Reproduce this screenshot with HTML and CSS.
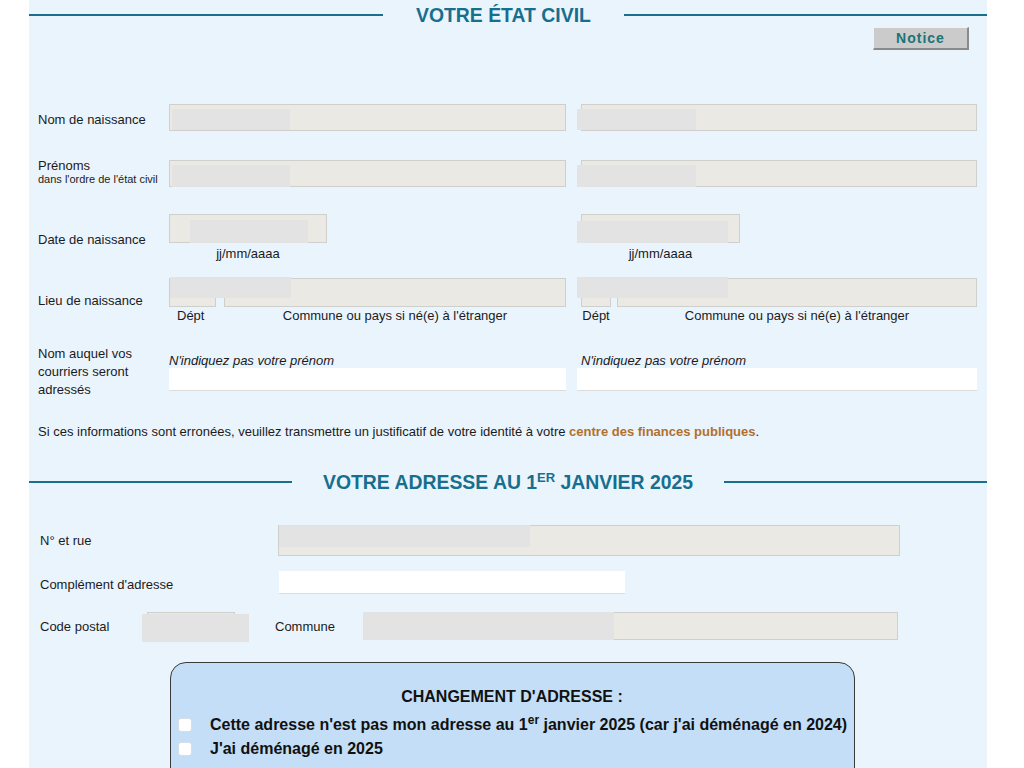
FILE: index.html
```html
<!DOCTYPE html>
<html lang="fr">
<head>
<meta charset="utf-8">
<title>Votre état civil</title>
<link rel="stylesheet" href="styles.css">
</head>
<body>
<div class="panel">
  <div class="section-head head-1">
    <span class="rule rule-left"></span>
    <h2 class="head-title">VOTRE ÉTAT CIVIL</h2>
    <span class="rule rule-right"></span>
  </div>
  <div class="notice-row"><button class="notice" type="button">Notice</button></div>

  <div class="row row-nom">
    <div class="label label-low">Nom de naissance</div>
    <div class="cell"><div class="field h27"><span class="mask mask-a"></span></div></div>
    <div class="cell"><div class="field h27"><span class="mask mask-b"></span></div></div>
  </div>

  <div class="row row-prenoms">
    <div class="label label-two">
      <span class="label-main">Prénoms</span>
      <span class="label-sub">dans l'ordre de l'état civil</span>
    </div>
    <div class="cell"><div class="field h27"><span class="mask mask-a mask-tall"></span></div></div>
    <div class="cell"><div class="field h27"><span class="mask mask-b mask-tall"></span></div></div>
  </div>

  <div class="row row-date">
    <div class="label label-low">Date de naissance</div>
    <div class="cell">
      <div class="col date-left">
        <div class="field h29"><span class="mask mask-date-l"></span></div>
        <div class="hint hint-date">jj/mm/aaaa</div>
      </div>
    </div>
    <div class="cell">
      <div class="col date-right">
        <div class="field h29"><span class="mask mask-date-r"></span></div>
        <div class="hint hint-date">jj/mm/aaaa</div>
      </div>
    </div>
  </div>

  <div class="row row-lieu">
    <div class="label">Lieu de naissance</div>
    <div class="cell lieu">
      <div class="col dept-l">
        <div class="field h29"></div>
        <div class="hint hint-dept">Dépt</div>
      </div>
      <div class="col grow">
        <div class="field h29"></div>
        <div class="hint">Commune ou pays si né(e) à l'étranger</div>
      </div>
      <span class="mask mask-lieu-l"></span>
    </div>
    <div class="cell lieu lieu-r">
      <div class="col dept-r">
        <div class="field h29"></div>
        <div class="hint">Dépt</div>
      </div>
      <div class="col grow">
        <div class="field h29"></div>
        <div class="hint">Commune ou pays si né(e) à l'étranger</div>
      </div>
      <span class="mask mask-lieu-r"></span>
    </div>
  </div>

  <div class="row row-courrier">
    <div class="label label-multi">Nom auquel vos courriers seront adressés</div>
    <div class="cell">
      <div class="note">N'indiquez pas votre prénom</div>
      <div class="field field-white h23"></div>
    </div>
    <div class="cell">
      <div class="note">N'indiquez pas votre prénom</div>
      <div class="field field-white h23 shift-left"></div>
    </div>
  </div>

  <p class="info">Si ces informations sont erronées, veuillez transmettre un justificatif de votre identité à votre <a class="info-link" href="#">centre des finances publiques</a>.</p>

  <div class="section-head head-2">
    <span class="rule rule-left-2"></span>
    <h2 class="head-title">VOTRE ADRESSE AU 1<sup class="sup-head">ER</sup> JANVIER 2025</h2>
    <span class="rule rule-right"></span>
  </div>

  <div class="arow arow-rue">
    <div class="alabel">N° et rue</div>
    <div class="field field-rue h31"><span class="mask mask-rue"></span></div>
  </div>

  <div class="arow arow-comp">
    <div class="alabel alabel-low">Complément d'adresse</div>
    <div class="field field-white field-comp h23"></div>
  </div>

  <div class="arow arow-cp">
    <div class="alabel alabel-cp">Code postal</div>
    <div class="field field-cp h28"><span class="mask mask-cp"></span></div>
    <div class="alabel alabel-commune">Commune</div>
    <div class="field field-commune h28"><span class="mask mask-commune"></span></div>
  </div>

  <div class="change-box">
    <div class="change-title">CHANGEMENT D'ADRESSE :</div>
    <label class="check-line"><span class="checkbox"></span><span>Cette adresse n'est pas mon adresse au 1<sup class="sup-small">er</sup> janvier 2025 (car j'ai déménagé en 2024)</span></label>
    <label class="check-line"><span class="checkbox"></span><span>J'ai déménagé en 2025</span></label>
  </div>
</div>
</body>
</html>
```

FILE: styles.css
```css
html, body {
  margin: 0;
  padding: 0;
  background: #ffffff;
}

body {
  font-family: "Liberation Sans", Arial, Helvetica, sans-serif;
  color: #1b1b1b;
  font-size: 13px;
}

.panel {
  margin-left: 29px;
  width: 958px;
  min-height: 768px;
  background: #eaf4fd;
  overflow: hidden;
}

/* Section headings */
.section-head {
  display: flex;
  align-items: center;
  height: 22px;
}

.head-1 {
  padding-top: 4px;
}

.head-2 {
  margin-top: 28px;
  height: 30px;
}

.rule {
  display: block;
  height: 2px;
  background: #1a6f8b;
}

.rule-left {
  width: 354px;
}

.rule-left-2 {
  width: 263px;
}

.rule-right {
  flex: 1;
}

.head-title {
  margin: 0 33px;
  font-size: 19.4px;
  font-weight: bold;
  color: #166f8d;
  line-height: 22px;
  white-space: nowrap;
}

.head-2 .head-title {
  margin: 0 31px;
}

.sup-head {
  font-size: 13px;
  line-height: 0;
  vertical-align: 7px;
}

/* Notice button */
.notice-row {
  display: flex;
  justify-content: flex-end;
  padding-right: 18px;
  height: 24px;
}

.notice {
  margin-top: 1px;
  width: 96px;
  height: 23px;
  padding: 0;
  background: #cbcbcb;
  border-style: solid;
  border-width: 1px 2px 2px 1px;
  border-color: #f2f2f2 #8a8a8a #8a8a8a #f2f2f2;
  font-family: "Liberation Sans", Arial, sans-serif;
  font-size: 14px;
  font-weight: bold;
  letter-spacing: 1px;
  color: #1b7478;
}

/* Etat civil rows */
.row {
  display: grid;
  grid-template-columns: 116px 397px 396px;
  column-gap: 15px;
  align-items: center;
  padding-left: 9px;
}

.row-nom { margin-top: 54px; }
.row-prenoms { margin-top: 29px; }
.row-date { margin-top: 27px; }
.row-lieu { margin-top: 17px; }
.row-courrier { margin-top: 22px; }

.label {
  font-size: 13px;
  line-height: 15px;
}

.label-low {
  padding-top: 3px;
}

.label-two {
  display: flex;
  flex-direction: column;
  align-self: start;
  margin-top: -2px;
  margin-bottom: -2px;
}

.label-main {
  font-size: 13px;
  line-height: 15px;
}

.label-sub {
  font-size: 11px;
  line-height: 13px;
  white-space: nowrap;
}

.label-multi {
  line-height: 18px;
  width: 100px;
}

.cell {
  position: relative;
}

.col {
  display: flex;
  flex-direction: column;
  align-items: stretch;
}

.date-left { width: 158px; }
.date-right { width: 159px; }

.lieu {
  display: flex;
  gap: 8px;
}

.lieu-r {
  gap: 6px;
}

.dept-l { width: 47px; }
.dept-r { width: 30px; }
.grow { flex: 1; }

.hint {
  text-align: center;
  font-size: 13px;
  line-height: 15px;
  margin-top: 1px;
  white-space: nowrap;
}

.hint-dept {
  text-align: left;
  padding-left: 8px;
}

.hint-date {
  margin-top: 3px;
}

.note {
  font-style: italic;
  font-size: 13px;
  line-height: 15px;
}

/* Fields */
.field {
  position: relative;
  box-sizing: border-box;
  background: #eae9e3;
  border: 1px solid #cfcfcb;
}

.field-white {
  background: #ffffff;
  border: none;
  border-bottom: 1px solid #dcdcdc;
}

.shift-left {
  margin-left: -4px;
}

.h23 { height: 23px; }
.h27 { height: 27px; }
.h28 { height: 28px; }
.h29 { height: 29px; }
.h31 { height: 31px; }

/* Redaction masks over the fields */
.mask {
  position: absolute;
  display: block;
  background: #e3e3e3;
}

.mask-a {
  left: 2px;
  top: 4px;
  width: 118px;
  height: 21px;
}

.mask-b {
  left: -5px;
  top: 4px;
  width: 119px;
  height: 21px;
}

.mask-tall {
  height: 22px;
}

.mask-date-l {
  left: 20px;
  top: 5px;
  width: 118px;
  height: 23px;
}

.mask-date-r {
  left: -5px;
  top: 6px;
  width: 151px;
  height: 22px;
}

.mask-lieu-l {
  left: 1px;
  top: -1px;
  width: 121px;
  height: 21px;
}

.mask-lieu-r {
  left: -4px;
  top: -1px;
  width: 151px;
  height: 21px;
}

/* Adresse rows */
.arow {
  display: flex;
  align-items: center;
  padding-left: 11px;
}

.arow-rue { margin-top: 28px; }
.arow-comp { margin-top: 15px; }
.arow-cp { margin-top: 18px; }

.alabel {
  width: 238px;
  font-size: 13px;
  line-height: 15px;
  flex: none;
}

.alabel-low {
  padding-top: 3px;
}

.field-rue {
  width: 622px;
}

.field-comp {
  width: 346px;
  margin-left: 1px;
}

.alabel-cp {
  width: 107px;
}

.field-cp {
  width: 88px;
}

.alabel-commune {
  width: 88px;
  margin-left: 40px;
}

.field-commune {
  width: 535px;
}

.mask-rue {
  left: 0;
  top: -1px;
  width: 251px;
  height: 22px;
}

.mask-cp {
  left: -6px;
  top: 1px;
  width: 107px;
  height: 28px;
}

.mask-commune {
  left: -1px;
  top: -1px;
  width: 251px;
  height: 28px;
}

/* Changement d'adresse */
.change-box {
  margin: 22px 0 0 141px;
  width: 685px;
  box-sizing: border-box;
  background: #c3def6;
  border: 1.5px solid #3a3a3a;
  border-radius: 16px;
  padding: 24px 8px 30px 7px;
}

.change-title {
  text-align: center;
  font-size: 16px;
  font-weight: bold;
  line-height: 20px;
  color: #111111;
  margin-bottom: 6px;
}

.check-line {
  display: flex;
  align-items: center;
  gap: 18px;
  font-size: 16px;
  font-weight: bold;
  line-height: 24px;
  color: #111111;
  white-space: nowrap;
}

.checkbox {
  display: block;
  flex: none;
  width: 14px;
  height: 14px;
  background: #ffffff;
  border: 1px solid #d6dde4;
  border-radius: 3px;
  box-sizing: border-box;
}

.sup-small {
  font-size: 12px;
  line-height: 0;
  vertical-align: 6px;
}

.info {
  margin: 25px 0 0 0;
  padding-left: 9px;
  font-size: 13px;
  line-height: 15px;
}

.info-link {
  color: #b0712c;
  font-weight: bold;
  text-decoration: none;
}
```
